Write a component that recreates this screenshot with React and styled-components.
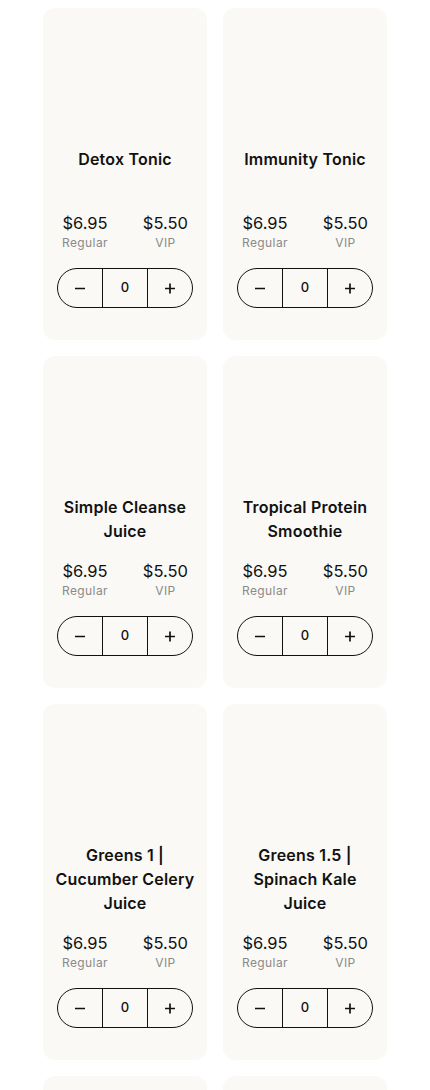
import React from "react";
import styled, { createGlobalStyle } from "styled-components";

const Global = createGlobalStyle`
  html, body { margin: 0; padding: 0; background: #ffffff; }
  body { font-family: Inter, "Noto Sans", sans-serif; color: #111; }
`;

const Page = styled.div`
  padding: 8px 0 0;
`;

const Grid = styled.div`
  width: 344px;
  margin: 0 auto;
  display: grid;
  grid-template-columns: 1fr 1fr;
  gap: 16px;
`;

const Card = styled.div`
  background: #faf9f6;
  border-radius: 12px;
  display: flex;
  flex-direction: column;
  align-items: center;
  padding: 0 0 32px;
`;

const ImageArea = styled.div`
  height: 139px;
  align-self: stretch;
`;

const Title = styled.div`
  min-height: 48px;
  font-size: 16px;
  line-height: 24px;
  font-weight: 600;
  letter-spacing: 0.2px;
  text-align: center;
  padding: 0 8px;
`;

const Prices = styled.div`
  align-self: stretch;
  display: flex;
  justify-content: space-between;
  padding: 0 19px;
  margin-top: 16.5px;
`;

const PriceCol = styled.div`
  display: flex;
  flex-direction: column;
  align-items: center;
`;

const Amount = styled.div`
  font-size: 16.5px;
  line-height: 22px;
  font-weight: 400;
`;

const Label = styled.div`
  font-size: 12px;
  line-height: 18px;
  letter-spacing: 0.4px;
  color: #8a8a8a;
`;

const Stepper = styled.div`
  margin-top: 16.5px;
  width: 136px;
  height: 40px;
  box-sizing: border-box;
  border: 1.5px solid #111;
  border-radius: 20px;
  display: grid;
  grid-template-columns: 1fr 1fr 1fr;
  overflow: hidden;
`;

const StepBtn = styled.button`
  all: unset;
  display: flex;
  align-items: center;
  justify-content: center;
  border-left: ${(p) => (p.$divider ? "1.5px solid #111" : "none")};
  border-right: ${(p) => (p.$dividerRight ? "1.5px solid #111" : "none")};
  cursor: pointer;
`;

const Count = styled.div`
  display: flex;
  align-items: center;
  justify-content: center;
  font-size: 13px;
  font-weight: 500;
  padding-bottom: 3px;
`;

const Minus = () => (
  <svg width="12" height="12" viewBox="0 0 12 12">
    <path d="M1 6.5h10" stroke="#111" strokeWidth="1.7" />
  </svg>
);
const Plus = () => (
  <svg width="12" height="12" viewBox="0 0 12 12">
    <path d="M1 6.5h10M6 1.5v10" stroke="#111" strokeWidth="1.7" />
  </svg>
);

const products = [
  "Detox Tonic",
  "Immunity Tonic",
  "Simple Cleanse Juice",
  "Tropical Protein Smoothie",
  "Greens 1 | Cucumber Celery Juice",
  "Greens 1.5 | Spinach Kale Juice",
  "Greens 2 | Kale Apple Juice",
  "Citrus Carrot Juice",
];

const Product = ({ name }) => (
  <Card>
    <ImageArea />
    <Title>{name}</Title>
    <Prices>
      <PriceCol>
        <Amount>$6.95</Amount>
        <Label>Regular</Label>
      </PriceCol>
      <PriceCol>
        <Amount>$5.50</Amount>
        <Label>VIP</Label>
      </PriceCol>
    </Prices>
    <Stepper>
      <StepBtn $dividerRight aria-label="decrease">
        <Minus />
      </StepBtn>
      <Count>0</Count>
      <StepBtn $divider aria-label="increase">
        <Plus />
      </StepBtn>
    </Stepper>
  </Card>
);

export default function App() {
  return (
    <Page>
      <Global />
      <Grid>
        {products.map((n) => (
          <Product key={n} name={n} />
        ))}
      </Grid>
    </Page>
  );
}
